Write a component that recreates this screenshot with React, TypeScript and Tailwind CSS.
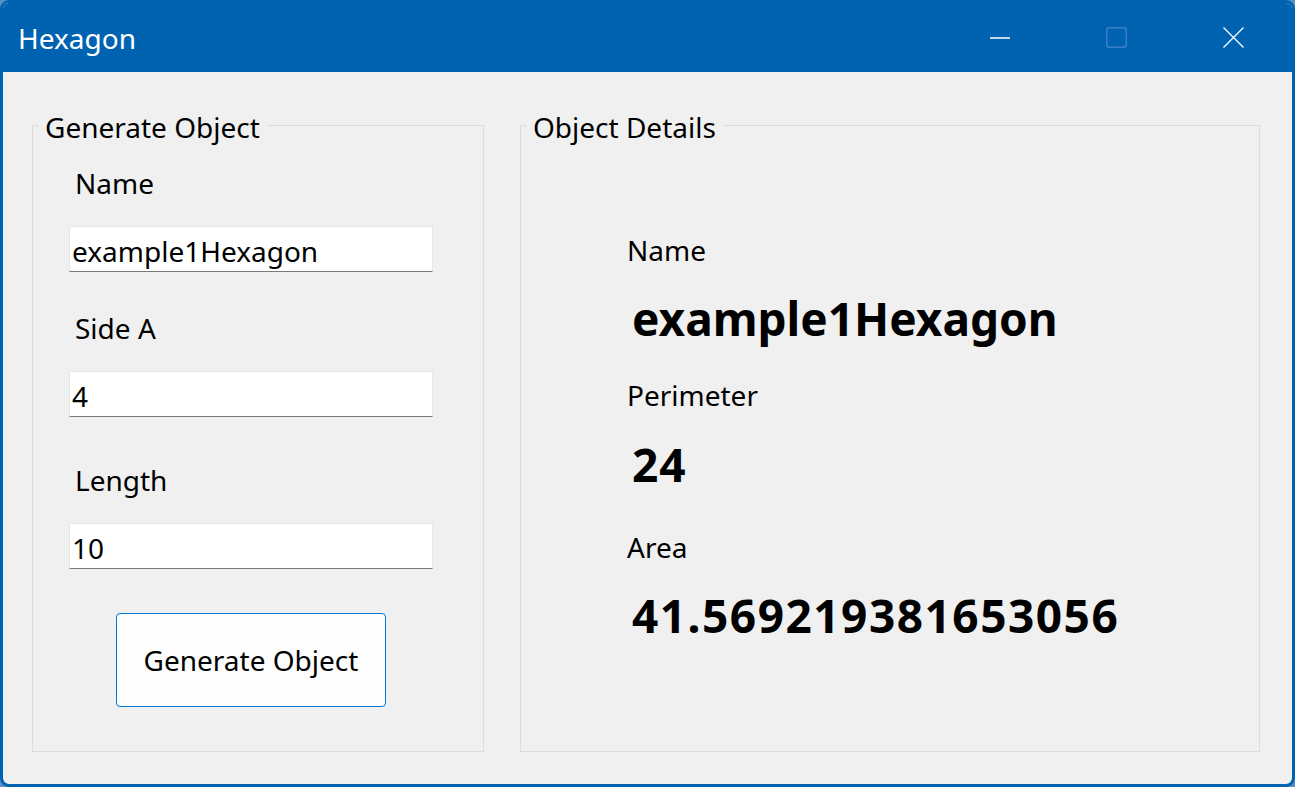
import React from "react";

const font = { fontFamily: '"Noto Sans", "Open Sans", sans-serif' };

const Field = ({ value }: { value: string }) => (
  <div className="ml-[36px] mt-[25px] flex h-[46px] w-[364px] items-center border border-[#e6e6e6] border-b-[#7a7a7a] bg-white pl-[2px] pt-[4px] text-[28px] leading-[36px] text-black">
    {value}
  </div>
);

const Label = ({ text, className }: { text: string; className: string }) => (
  <div className={`text-[28px] leading-[36px] text-black ${className}`}>{text}</div>
);

const Value = ({ text, className }: { text: string; className: string }) => (
  <div className={`ml-[111px] text-[46px] font-bold leading-[60px] text-black ${className}`}>{text}</div>
);

export default function App() {
  return (
    <div className="h-[787px] w-[1295px] bg-[#5b8cc4]" style={font}>
      <div className="flex h-full w-full flex-col overflow-hidden rounded-[9px] border-[3px] border-[#0063b1] bg-[#f0f0f0]">
        {/* title bar */}
        <div className="flex h-[69px] shrink-0 items-center bg-[#0063b1]">
          <div className="flex-1 pl-[15px] text-[28px] leading-[36px] text-white">Hexagon</div>
          <div className="flex h-full w-[116px] items-center justify-center">
            <svg width="20" height="20" viewBox="0 0 20 20">
              <line x1="0" y1="10" x2="20" y2="10" stroke="#ffffff" strokeWidth="1.3" />
            </svg>
          </div>
          <div className="flex h-full w-[116px] items-center justify-center">
            <svg width="21" height="21" viewBox="0 0 21 21">
              <rect x="0.75" y="0.75" width="19.5" height="19.5" rx="2.5" fill="none" stroke="#3a80c6" strokeWidth="1.5" />
            </svg>
          </div>
          <div className="flex h-full w-[118px] items-center justify-center">
            <svg width="21" height="21" viewBox="0 0 21 21">
              <path d="M0.5 0.5 L20.5 20.5 M20.5 0.5 L0.5 20.5" stroke="#ffffff" strokeWidth="1.3" fill="none" />
            </svg>
          </div>
        </div>

        {/* body */}
        <div className="flex flex-1 gap-[36px] pb-[32px] pl-[29px] pr-[32px] pt-[33px]">
          <fieldset className="flex w-[452px] flex-col border border-[#dcdcdc]">
            <legend className="ml-[5px] px-[7px] pt-[4px] text-[28px] leading-[36px] text-black">Generate Object</legend>
            <Label text="Name" className="ml-[42px] mt-[20px]" />
            <Field value="example1Hexagon" />
            <Label text="Side A" className="ml-[42px] mt-[38px]" />
            <Field value="4" />
            <Label text="Length" className="ml-[42px] mt-[45px]" />
            <Field value="10" />
            <button className="ml-[83px] mt-[44px] flex h-[94px] w-[270px] items-center justify-center rounded-[4px] border border-[#0078d4] bg-[#fdfdfd] text-[28px] leading-[36px] text-black">
              Generate Object
            </button>
          </fieldset>

          <fieldset className="flex w-[740px] flex-col border border-[#dcdcdc]">
            <legend className="ml-[5px] px-[7px] pt-[4px] text-[28px] leading-[36px] text-black">Object Details</legend>
            <Label text="Name" className="ml-[106px] mt-[87px]" />
            <Value text="example1Hexagon" className="mt-[20px]" />
            <Label text="Perimeter" className="ml-[106px] mt-[29px]" />
            <Value text="24" className="mt-[21px] tracking-[1px]" />
            <Label text="Area" className="ml-[106px] mt-[35px]" />
            <Value text="41.569219381653056" className="mt-[20px] tracking-[1.5px]" />
          </fieldset>
        </div>
      </div>
    </div>
  );
}
